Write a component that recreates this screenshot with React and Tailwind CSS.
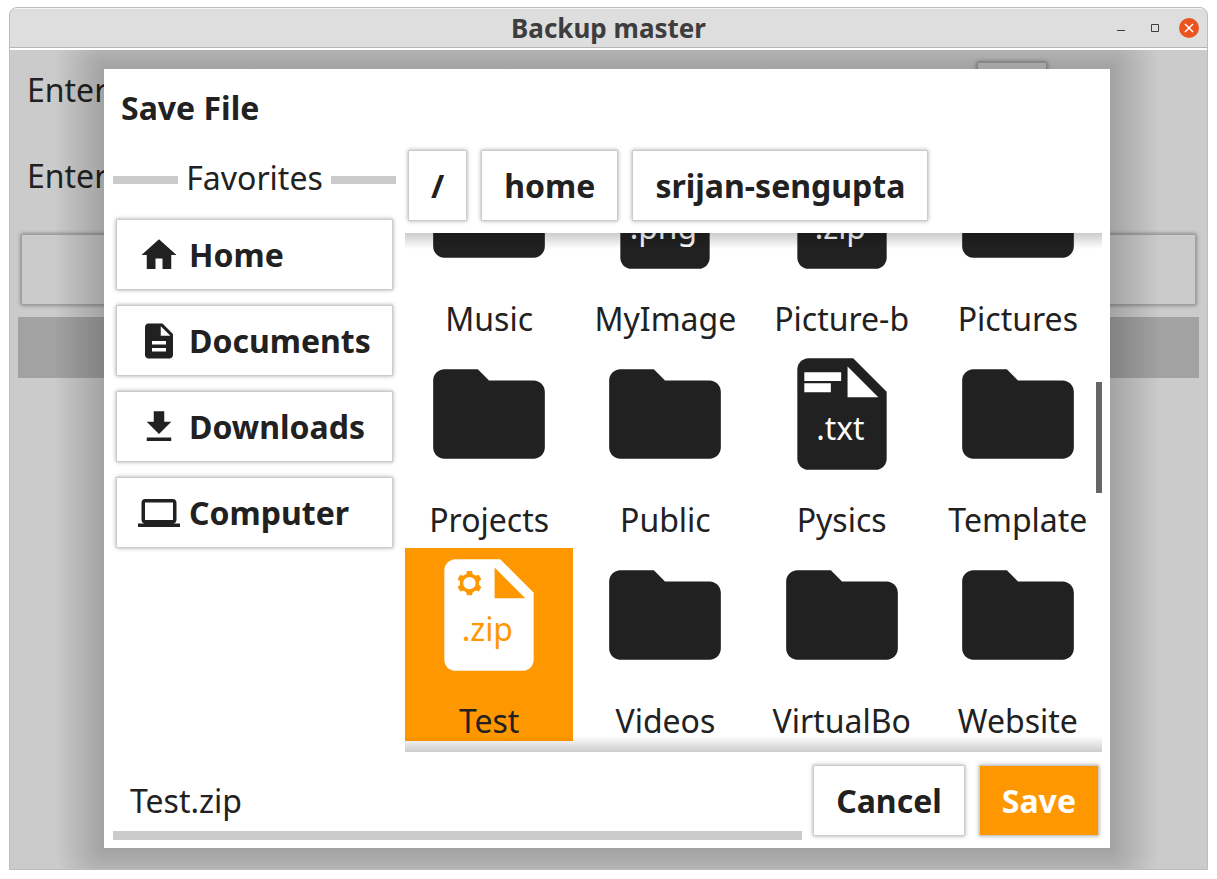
import React, { useState } from "react";

const RAISED = "border border-[#cccccc] bg-white shadow-[0_0_4px_rgba(0,0,0,0.35)]";
const DIMMED = "border border-[#a0a0a0] bg-[#cbcbcb] shadow-[0_0_4px_rgba(0,0,0,0.45)]";

const favorites = [
  { name: "Home", d: "M10 20v-6h4v6h5v-8h3L12 3 2 12h3v8z" },
  {
    name: "Documents",
    d: "M14 2H6c-1.1 0-2 .9-2 2v16c0 1.1.9 2 2 2h12c1.1 0 2-.9 2-2V8l-6-6zm2 16H8v-2h8v2zm0-4H8v-2h8v2zm-3-5V3.5L18.5 9H13z",
  },
  { name: "Downloads", d: "M19 9h-4V3H9v6H5l7 7 7-7zM5 18v2h14v-2H5z" },
  {
    name: "Computer",
    d: "M20 18c1.1 0 2-.9 2-2V6c0-1.1-.9-2-2-2H4c-1.1 0-2 .9-2 2v10c0 1.1.9 2 2 2H0v2h24v-2h-4zM4 6h16v10H4V6z",
  },
];

const path = ["/", "home", "srijan-sengupta"];

const files = [
  { name: "Music" },
  { name: "MyImage", ext: ".png" },
  { name: "Picture-b", ext: ".zip" },
  { name: "Pictures" },
  { name: "Projects" },
  { name: "Public" },
  { name: "Pysics", ext: ".txt" },
  { name: "Template" },
  { name: "Test", ext: ".zip" },
  { name: "Videos" },
  { name: "VirtualBo" },
  { name: "Website" },
];

const teeth = [0, 60, 120, 180, 240, 300];

function Gear() {
  return (
    <g transform="translate(8.5 6.3)">
      <circle r="1.42" fill="none" stroke="currentColor" strokeWidth="0.62" />
      {teeth.map((angle) => (
        <path
          key={angle}
          transform={`rotate(${angle})`}
          d="M-.9-1.3L-.56-1.66-.46-2.18H.46L.56-1.66 .9-1.3Z"
          fill="currentColor"
        />
      ))}
    </g>
  );
}

function FileIcon({ ext, selected }) {
  if (!ext) {
    return (
      <svg viewBox="0 0 24 24" className="size-[134px] fill-[#212121]" aria-hidden="true">
        <path d="M10 4H4c-1.1 0-2 .9-2 2v12c0 1.1.9 2 2 2h16c1.1 0 2-.9 2-2V8c0-1.1-.9-2-2-2h-8l-2-2z" />
      </svg>
    );
  }
  return (
    <svg
      viewBox="0 0 24 24"
      className={selected ? "size-[134px] text-[#ff9800]" : "size-[134px] text-white"}
      aria-hidden="true"
    >
      <path
        className={selected ? "fill-white" : "fill-[#212121]"}
        d="M14 2H6c-1.1 0-2 .9-2 2v16c0 1.1.9 2 2 2h12c1.1 0 2-.9 2-2V8l-6-6z"
      />
      <path fill="currentColor" d="M13 3.5V9h5.5z" />
      {ext === ".txt" ? (
        <path fill="currentColor" d="M5.25 4.5h6.6v1.6h-6.6zM5.25 6.5h4.75v1.6H5.25z" />
      ) : (
        <Gear />
      )}
      <text x="11.7" y="16.7" fontSize="5.7" textAnchor="middle" fill="currentColor">
        {ext}
      </text>
    </svg>
  );
}

function DialogShadow() {
  return (
    <div
      aria-hidden="true"
      className="pointer-events-none absolute -inset-[50px] grid grid-cols-[50px_1fr_50px] grid-rows-[50px_1fr_50px]"
    >
      <div className="bg-[radial-gradient(circle_at_bottom_right,rgba(0,0,0,0.2),transparent_50px)]" />
      <div className="bg-[linear-gradient(to_top,rgba(0,0,0,0.2),transparent)]" />
      <div className="bg-[radial-gradient(circle_at_bottom_left,rgba(0,0,0,0.2),transparent_50px)]" />
      <div className="bg-[linear-gradient(to_left,rgba(0,0,0,0.2),transparent)]" />
      <div />
      <div className="bg-[linear-gradient(to_right,rgba(0,0,0,0.2),transparent)]" />
      <div className="bg-[radial-gradient(circle_at_top_right,rgba(0,0,0,0.2),transparent_50px)]" />
      <div className="bg-[linear-gradient(to_bottom,rgba(0,0,0,0.2),transparent)]" />
      <div className="bg-[radial-gradient(circle_at_top_left,rgba(0,0,0,0.2),transparent_50px)]" />
    </div>
  );
}

function TitleBar() {
  return (
    <header className="grid h-[42px] shrink-0 grid-cols-[1fr_auto_1fr] items-center border-b-2 border-white bg-[#dedede] shadow-[inset_0_1px_0_#f4f4f4,inset_0_-1px_0_#b4b4b4]">
      <span />
      <h1 className="text-[26px] leading-9 font-bold text-[#3d3d3d]">Backup master</h1>
      <div className="flex items-center justify-end gap-[14px] pr-2">
        <button type="button" aria-label="Minimize" className="flex size-5 items-center justify-center">
          <svg viewBox="0 0 20 20" className="size-5">
            <path d="M6 12.500h8" stroke="#3d3d3d" />
          </svg>
        </button>
        <button type="button" aria-label="Maximize" className="flex size-5 items-center justify-center">
          <svg viewBox="0 0 20 20" className="size-5">
            <path d="M6.500 6.500h7v7h-7z" stroke="#3d3d3d" fill="none" />
          </svg>
        </button>
        <button type="button" aria-label="Close" className="flex size-5 items-center justify-center rounded-full bg-[#e95420]">
          <svg viewBox="0 0 20 20" className="size-5">
            <path d="M6 6l8 8M14 6l-8 8" stroke="white" strokeWidth="1.5" />
          </svg>
        </button>
      </div>
    </header>
  );
}

function Backdrop() {
  return (
    <div className="flex flex-col px-[9px] pt-3" aria-hidden="true">
      <div className="flex h-[71px] items-start justify-between pr-[152px] pl-[9px]">
        <span className="leading-[56px]">Enter</span>
        <div className={`h-[71px] w-[70px] ${DIMMED}`} />
      </div>
      <div className="mt-[15px] flex h-[71px] items-start pl-[9px]">
        <span className="leading-[56px]">Enter</span>
      </div>
      <div className={`mx-[3px] mt-[15px] h-[71px] ${DIMMED}`} />
      <div className="mt-3 h-[61px] bg-[#a2a2a2]" />
    </div>
  );
}

export default function App() {
  const [selected, setSelected] = useState("Test");

  return (
    <div className="flex h-screen min-h-[640px] flex-col bg-white px-[9px] pt-[7px] pb-[9px] font-['Noto_Sans','Open_Sans',sans-serif] text-[32px] text-[#212121]">
      <div className="flex min-h-0 flex-1 flex-col overflow-hidden rounded-t-lg border border-[#bcbcbc] bg-[#cbcbcb]">
        <TitleBar />
        <main className="relative -mx-px min-h-0 flex-1 overflow-hidden">
          <Backdrop />

          <div className="absolute top-[19px] right-[98px] bottom-[21px] left-[95px]">
            <DialogShadow />
            <form
              role="dialog"
              aria-labelledby="dialog-title"
              className="relative flex h-full flex-col bg-white pb-3 pl-[9px]"
              onSubmit={(event) => event.preventDefault()}
            >
              <h2 id="dialog-title" className="mt-[17px] pl-2 leading-[44px] font-bold">
                Save File
              </h2>

              <div className="flex min-h-0 flex-1 gap-[9px] pr-2">
                <nav className="flex w-[283px] shrink-0 flex-col pt-[26px]" aria-label="Favorites">
                  <div className="flex items-center gap-2">
                    <span className="mt-1 h-2 flex-1 bg-[#cbcbcb]" />
                    <span className="leading-[44px]">Favorites</span>
                    <span className="mt-1 h-2 flex-1 bg-[#cbcbcb]" />
                  </div>
                  <ul className="mx-[3px] mt-[19px] flex flex-col gap-[15px]">
                    {favorites.map((item) => (
                      <li key={item.name}>
                        <button
                          type="button"
                          className={`flex h-[71px] w-full items-center gap-[9px] pl-[21px] font-bold ${RAISED}`}
                        >
                          <svg viewBox="0 0 24 24" className="size-[42px] fill-[#212121]" aria-hidden="true">
                            <path d={item.d} />
                          </svg>
                          {item.name}
                        </button>
                      </li>
                    ))}
                  </ul>
                </nav>

                <section className="flex min-w-0 flex-1 flex-col pt-5" aria-label="Files">
                  <div className="flex gap-[14px] pl-[3px]">
                    {path.map((part) => (
                      <button key={part} type="button" className={`h-[71px] px-[22px] font-bold ${RAISED}`}>
                        {part}
                      </button>
                    ))}
                  </div>

                  <div className="relative mt-3 flex min-h-0 flex-1 flex-col justify-end overflow-hidden pb-[11px]">
                    <ul className="grid shrink-0 grid-cols-4 gap-x-2 gap-y-2">
                      {files.map((file) => (
                        <li key={file.name}>
                          <button
                            type="button"
                            onClick={() => setSelected(file.name)}
                            className={
                              file.name === selected
                                ? "flex w-full flex-col items-center gap-[19px] bg-[#ff9800]"
                                : "flex w-full flex-col items-center gap-[19px]"
                            }
                          >
                            <FileIcon ext={file.ext} selected={file.name === selected} />
                            <span className="leading-10">{file.name}</span>
                          </button>
                        </li>
                      ))}
                    </ul>
                    <div className="pointer-events-none absolute inset-x-0 top-0 h-4 bg-linear-to-b from-black/20 to-transparent" />
                    <div className="pointer-events-none absolute inset-x-0 bottom-0 h-4 bg-linear-to-t from-black/20 to-transparent" />
                    <div className="absolute top-[149px] right-0 h-[111px] w-1.5 bg-[#666666]" />
                  </div>
                </section>
              </div>

              <div className="mt-[13px] flex h-[71px] items-start pr-[11px]">
                <input
                  type="text"
                  aria-label="File name"
                  defaultValue="Test.zip"
                  className="h-[75px] min-w-0 flex-1 border-b-[9px] border-[#cbcbcb] bg-white pt-1 pl-[17px] outline-none"
                />
                <button type="button" className={`ml-[11px] h-[71px] px-[22px] font-bold ${RAISED}`}>
                  Cancel
                </button>
                <button
                  type="submit"
                  className="ml-[14px] h-[71px] border border-[#cccccc] bg-[#ff9800] px-[22px] font-bold text-white shadow-[0_0_4px_rgba(0,0,0,0.35)]"
                >
                  Save
                </button>
              </div>
            </form>
          </div>
        </main>
      </div>
    </div>
  );
}
